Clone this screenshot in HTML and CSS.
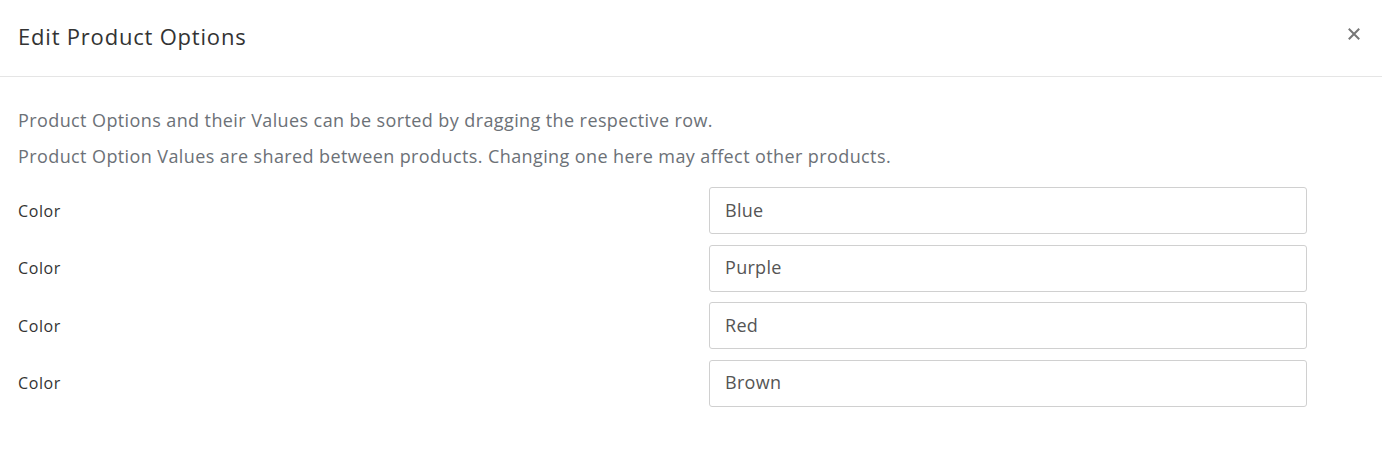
FILE: index.html
```html
<!DOCTYPE html>
<html>
<head>
<meta charset="utf-8">
<link rel="stylesheet" href="styles.css">
</head>
<body>
<div class="modal">
  <div class="header">
    <h1 class="title">Edit Product Options</h1>
    <button class="close" aria-label="Close">
      <svg width="12" height="12" viewBox="0 0 12 12"><path d="M1.5 1.5 L10.5 10.5 M10.5 1.5 L1.5 10.5" stroke="#777" stroke-width="2" stroke-linecap="square"/></svg>
    </button>
  </div>
  <div class="body">
    <p class="note">Product Options and their Values can be sorted by dragging the respective row.</p>
    <p class="note">Product Option Values are shared between products. Changing one here may affect other products.</p>
    <div class="rows">
      <div class="row"><span class="label">Color</span><input class="field" value="Blue"><span class="spacer"></span></div>
      <div class="row"><span class="label">Color</span><input class="field" value="Purple"><span class="spacer"></span></div>
      <div class="row"><span class="label">Color</span><input class="field" value="Red"><span class="spacer"></span></div>
      <div class="row"><span class="label">Color</span><input class="field" value="Brown"><span class="spacer"></span></div>
    </div>
  </div>
</div>
</body>
</html>
```
FILE: styles.css
```css
* { box-sizing: border-box; }
html, body { margin: 0; padding: 0; background: #fff; }
body { font-family: "Open Sans", "Lato", sans-serif; color: #333; }
.modal { width: 1382px; }
.header {
  height: 77px;
  border-bottom: 1px solid #e5e5e5;
  display: flex;
  align-items: center;
  justify-content: space-between;
  padding: 0 18px 4px 18px;
}
.title { margin: 0; font-size: 22px; font-weight: 400; color: #333; letter-spacing: 0.8px; }
.close { background: none; border: none; padding: 0; width: 14px; height: 14px; display: flex; align-items: center; justify-content: center; margin-right: 3px; margin-top: -5px; }
.body { padding: 32px 18px 0 18px; }
.note { margin: 0 0 14px 0; font-size: 18px; line-height: 22px; color: #6c7177; letter-spacing: 0.4px; }
.rows { display: flex; flex-direction: column; gap: 10.5px; margin-top: 20px; }
.row { display: grid; grid-template-columns: 691px 598px 1fr; align-items: center; }
.label { font-size: 16px; color: #333; letter-spacing: 0.6px; }
.field {
  height: 47px;
  border: 1px solid #d0d0d0;
  border-radius: 3px;
  padding: 0 15px 2px 15px;
  font-family: inherit;
  font-size: 18px;
  letter-spacing: 0.3px;
  color: #555;
  background: #fff;
}
```
